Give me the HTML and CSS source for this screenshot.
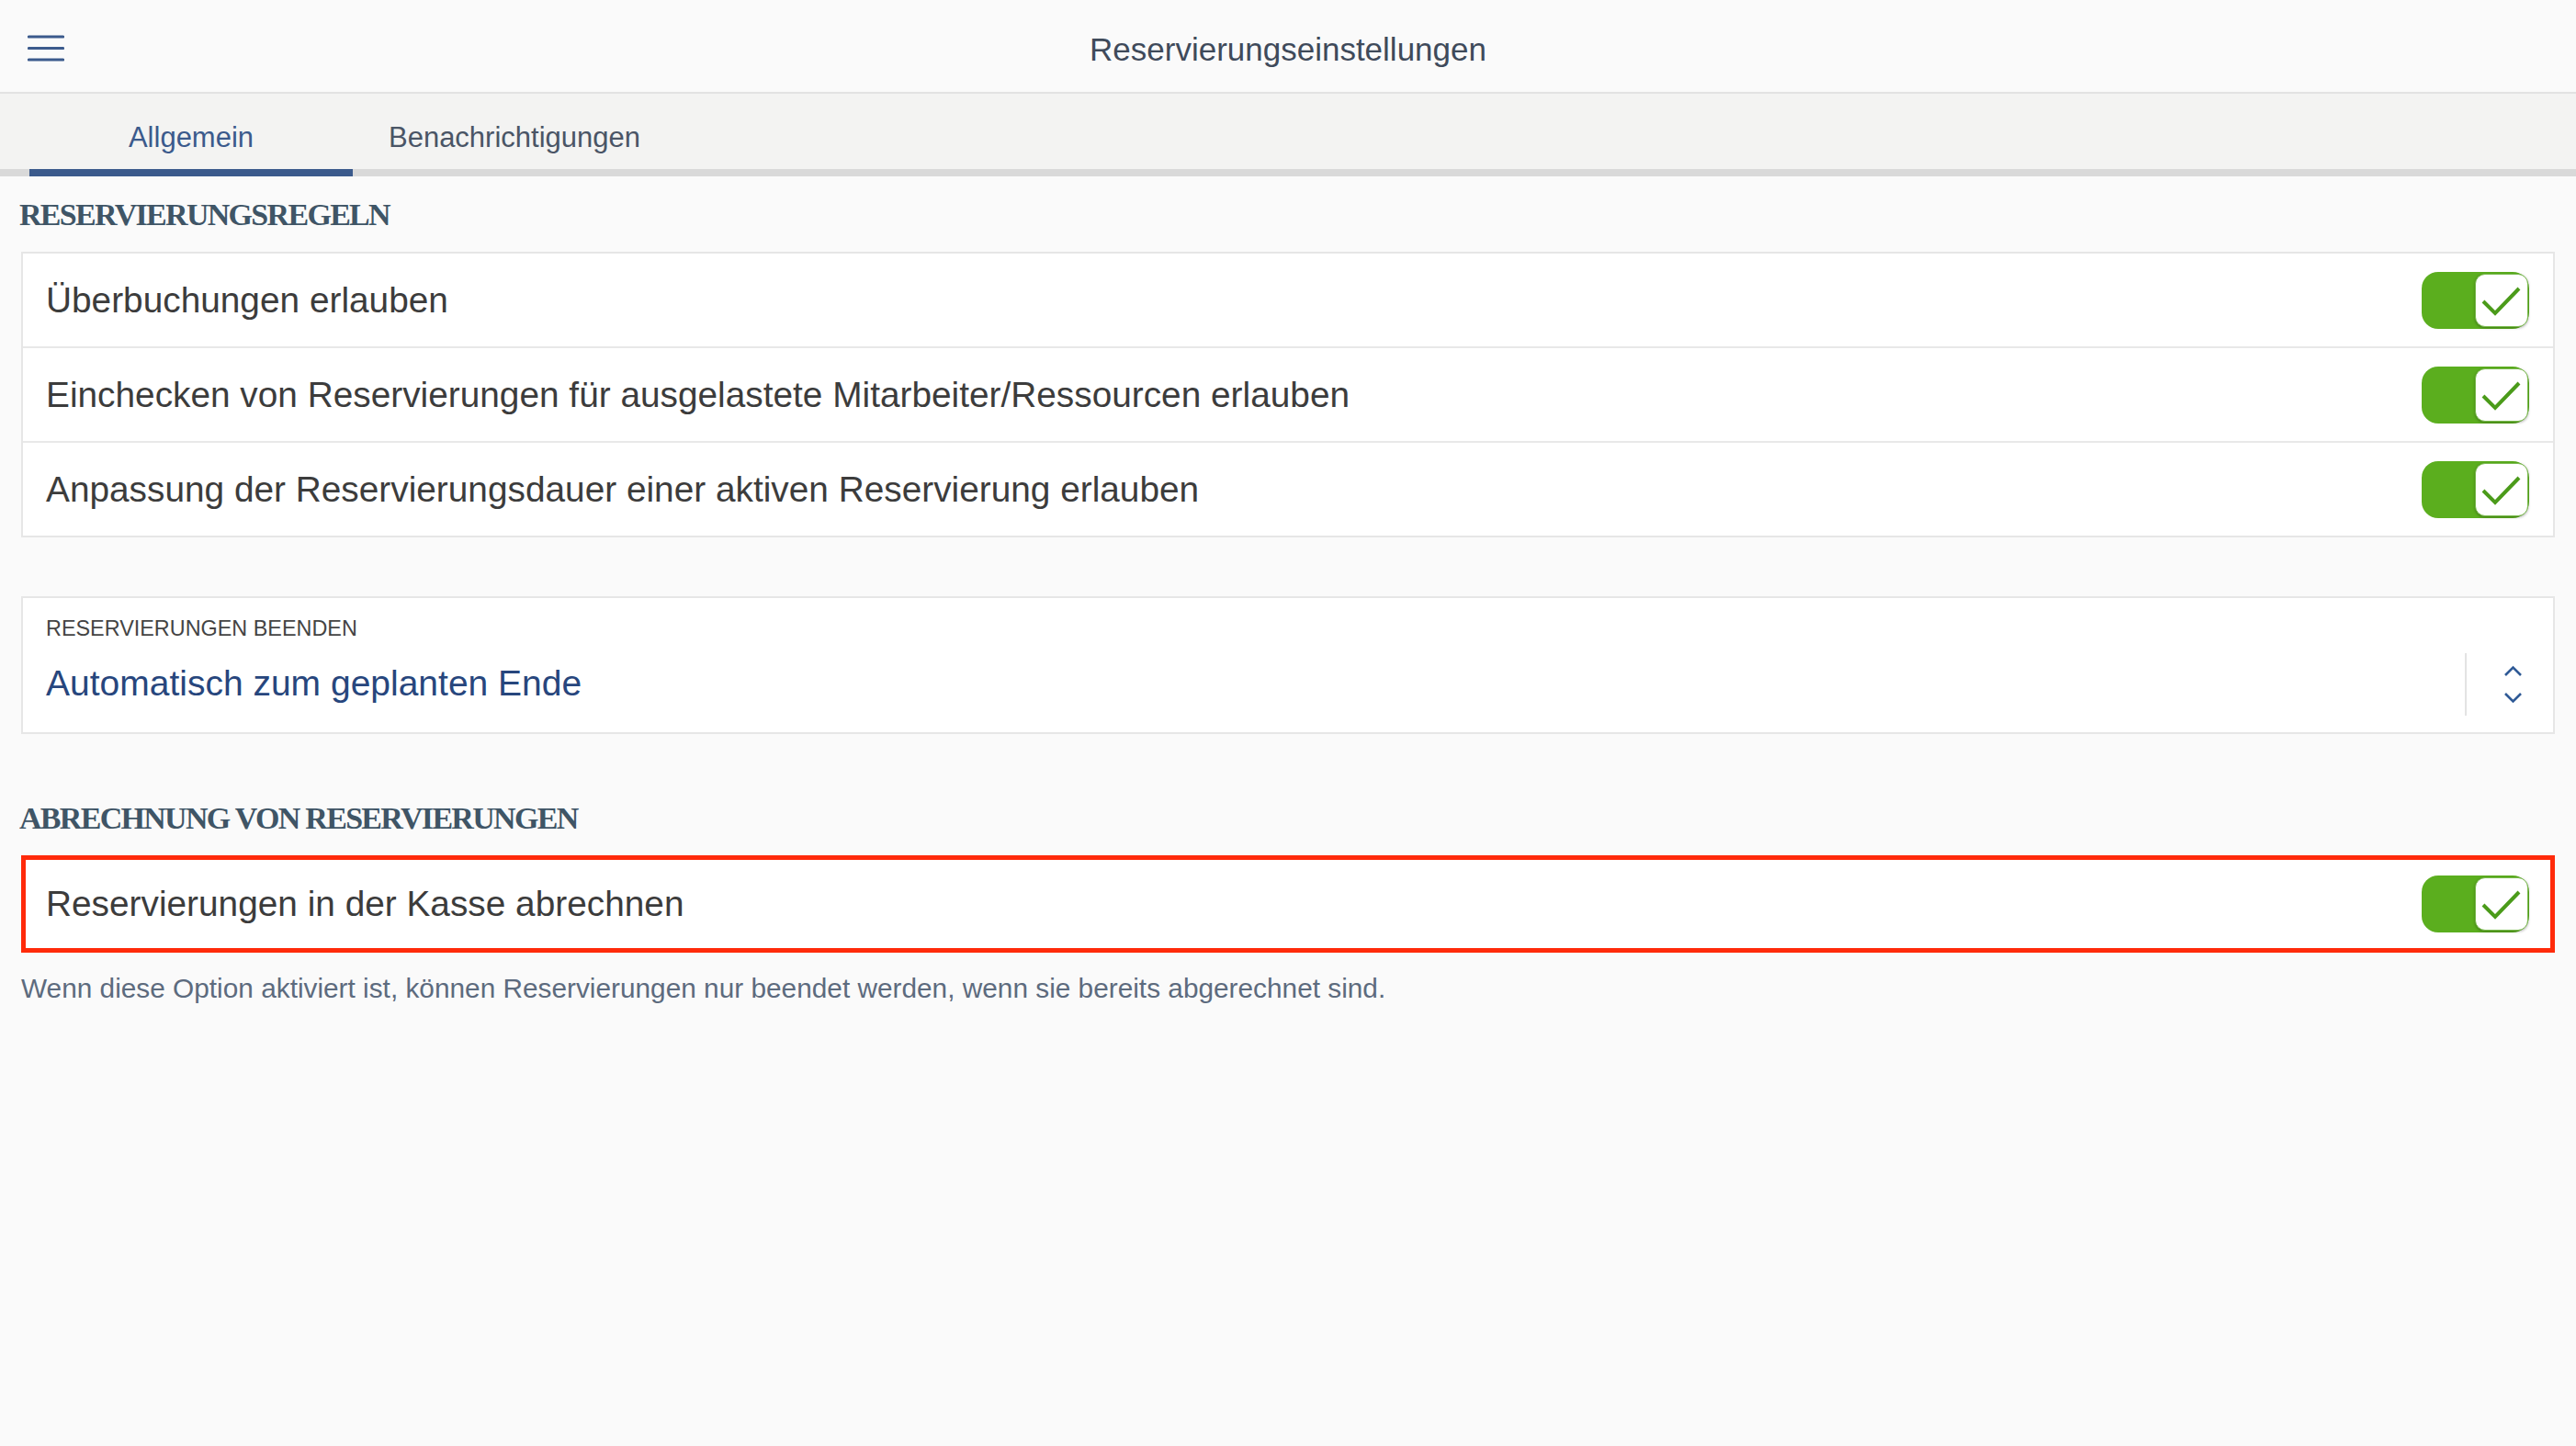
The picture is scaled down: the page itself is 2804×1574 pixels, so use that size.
FILE: index.html
```html
<!DOCTYPE html>
<html>
<head>
	<title>Reservierungseinstellungen</title>

	<link rel="stylesheet" href="styles.css">
</head>
<body>
	<div class="topbar">
		<a href="#" class="menu-btn">
			<svg width="40" height="30" viewBox="0 0 40 30">
				<path d="M1.5 2h37M1.5 14.5h37M1.5 27h37" stroke="#3b5a8c" stroke-width="3.2" stroke-linecap="round"/>
			</svg>
		</a>
		<h1 class="title">Reservierungseinstellungen</h1>
		<div></div>
	</div>

	<div class="tabs">
		<a href="#" class="tab active">Allgemein</a>
		<a href="#" class="tab">Benachrichtigungen</a>
	</div>

	<div class="content">
		<h2 class="section-title">RESERVIERUNGSREGELN</h2>
		<div class="card">
			<div class="row">
				<span class="row-label">Überbuchungen erlauben</span>
				<span class="toggle on"><span class="knob"><svg width="58" height="58" viewBox="0 0 58 58"><polyline points="9,30 22,43 48,16" fill="none" stroke="#4b9b1a" stroke-width="4"/></svg></span></span>
			</div>
			<div class="row">
				<span class="row-label">Einchecken von Reservierungen für ausgelastete Mitarbeiter/Ressourcen erlauben</span>
				<span class="toggle on"><span class="knob"><svg width="58" height="58" viewBox="0 0 58 58"><polyline points="9,30 22,43 48,16" fill="none" stroke="#4b9b1a" stroke-width="4"/></svg></span></span>
			</div>
			<div class="row">
				<span class="row-label">Anpassung der Reservierungsdauer einer aktiven Reservierung erlauben</span>
				<span class="toggle on"><span class="knob"><svg width="58" height="58" viewBox="0 0 58 58"><polyline points="9,30 22,43 48,16" fill="none" stroke="#4b9b1a" stroke-width="4"/></svg></span></span>
			</div>
		</div>

		<div class="card select">
			<div class="select-text">
				<div class="select-label">RESERVIERUNGEN BEENDEN</div>
				<div class="select-value">Automatisch zum geplanten Ende</div>
			</div>
			<div class="select-arrows">
				<svg width="21" height="42" viewBox="0 0 21 42">
					<polyline points="2,11 10.5,2.5 19,11" fill="none" stroke="#2f5a96" stroke-width="2.6"/>
					<polyline points="2,31 10.5,39.5 19,31" fill="none" stroke="#2f5a96" stroke-width="2.6"/>
				</svg>
			</div>
		</div>

		<h2 class="section-title second">ABRECHNUNG VON RESERVIERUNGEN</h2>
		<div class="card highlight">
			<div class="row">
				<span class="row-label">Reservierungen in der Kasse abrechnen</span>
				<span class="toggle on"><span class="knob"><svg width="58" height="58" viewBox="0 0 58 58"><polyline points="9,30 22,43 48,16" fill="none" stroke="#4b9b1a" stroke-width="4"/></svg></span></span>
			</div>
		</div>
		<p class="hint">Wenn diese Option aktiviert ist, können Reservierungen nur beendet werden, wenn sie bereits abgerechnet sind.</p>
	</div>
</body>
</html>
```

FILE: styles.css
```css
body{
	margin: 0;
	background: #fafafa;
	font-family: "Liberation Sans", Arial, sans-serif;
	color: #3c3c3c;
}
a{
	text-decoration: none;
}

/* top bar */
.topbar{
	display: grid;
	grid-template-columns: 1fr auto 1fr;
	align-items: center;
	height: 100px;
	border-bottom: 2px solid #e2e2e2;
	background: #fafafa;
}
.menu-btn{
	display: flex;
	padding-left: 30px;
	padding-top: 6px;
}
.title{
	margin: 0;
	font-size: 35px;
	font-weight: normal;
	color: #3f4a5a;
	padding-top: 8px;
}

/* tabs */
.tabs{
	display: flex;
	padding-left: 32px;
	background: #f3f3f2;
	border-bottom: 8px solid #d9d9d9;
}
.tab{
	width: 352px;
	height: 82px;
	line-height: 95px;
	text-align: center;
	font-size: 31px;
	color: #4a5566;
	margin-bottom: -8px;
	border-bottom: 8px solid transparent;
}
.tab.active{
	color: #3b5a8c;
	border-bottom-color: #3b5a8c;
}

/* content */
.content{
	padding: 0 23px;
}
.section-title{
	margin: 0;
	padding: 22px 0 20px;
	line-height: 40px;
	font-family: "Liberation Serif", "Times New Roman", serif;
	font-weight: bold;
	font-size: 34px;
	letter-spacing: -1.7px;
	color: #3f5566;
	margin-left: -2px;
}
.section-title.second{
	padding-top: 72px;
}
.card{
	background: #fff;
	border: 2px solid #e6e6e6;
}
.row{
	display: flex;
	align-items: center;
	justify-content: space-between;
	min-height: 101px;
	padding: 0 26px 0 25px;
}
.row + .row{
	border-top: 2px solid #e8e8e8;
}
.row-label{
	font-size: 38.8px;
}

/* toggle */
.toggle{
	display: flex;
	justify-content: flex-end;
	align-items: center;
	width: 117px;
	height: 62px;
	box-sizing: border-box;
	padding-right: 1px;
	border-radius: 18px;
	background: #5bae1e;
}
.knob{
	display: block;
	width: 58px;
	height: 58px;
	box-sizing: border-box;
	background: #fff;
	border-radius: 11px;
	border: 1px solid #78b94c;
	box-shadow: 0 1px 3px rgba(0,0,0,0.3);
}
.knob svg{
	display: block;
	margin: -1px;
}

/* select */
.card.select{
	display: flex;
	align-items: flex-end;
	padding: 18px 33px 30px 25px;
	margin-top: 64px;
}
.select-text{
	flex: 1;
}
.select-label{
	font-size: 23.4px;
	line-height: 30px;
	color: #444;
}
.select-value{
	margin-top: 22px;
	font-size: 39px;
	line-height: 46px;
	color: #27467d;
}
.select-arrows{
	display: flex;
	align-items: center;
	height: 68px;
	margin-bottom: -12px;
	padding-left: 40px;
	border-left: 2px solid #e3e3e3;
}

/* highlighted row */
.card.highlight{
	border: 5px solid #ff2a0a;
}
.card.highlight .row{
	min-height: 96px;
	padding-left: 22px;
	padding-right: 23px;
}
.hint{
	margin: 21px 0 0;
	font-size: 29.8px;
	line-height: 36px;
	color: #5d6b7e;
}
```
